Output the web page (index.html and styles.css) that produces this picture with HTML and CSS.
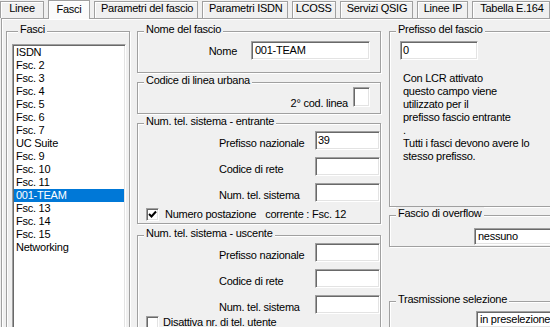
FILE: index.html
```html
<!DOCTYPE html>
<html lang="it">
<head>
<meta charset="utf-8">
<title>Fasci</title>
<link rel="stylesheet" href="styles.css">
</head>
<body>
<div class="tabs">
  <div class="tab">Linee</div>
  <div class="tab active">Fasci</div>
  <div class="tab">Parametri del fascio</div>
  <div class="tab">Parametri ISDN</div>
  <div class="tab tab-narrow">LCOSS</div>
  <div class="tab">Servizi QSIG</div>
  <div class="tab">Linee IP</div>
  <div class="tab tab-wide">Tabella E.164</div>
</div>
<div class="panel">
  <div class="col-left">
    <div class="group g-fasci">
      <div class="legend">Fasci</div>
      <ul class="listbox">
        <li>ISDN</li>
        <li>Fsc. 2</li>
        <li>Fsc. 3</li>
        <li>Fsc. 4</li>
        <li>Fsc. 5</li>
        <li>Fsc. 6</li>
        <li>Fsc. 7</li>
        <li>UC Suite</li>
        <li>Fsc. 9</li>
        <li>Fsc. 10</li>
        <li>Fsc. 11</li>
        <li class="selected">001-TEAM</li>
        <li>Fsc. 13</li>
        <li>Fsc. 14</li>
        <li>Fsc. 15</li>
        <li>Networking</li>
      </ul>
    </div>
  </div>
  <div class="col-mid">
    <div class="group g-nome">
      <div class="legend">Nome del fascio</div>
      <div class="row-right">
        <span class="lbl lbl-nome">Nome</span>
        <div class="field f-nome">001-TEAM</div>
      </div>
    </div>
    <div class="group g-codice">
      <div class="legend">Codice di linea urbana</div>
      <div class="row-right">
        <span class="lbl lbl-cod">2° cod. linea</span>
        <div class="field f-small"></div>
      </div>
    </div>
    <div class="group g-entrante">
      <div class="legend">Num. tel. sistema - entrante</div>
      <div class="form-grid">
        <span class="lbl">Prefisso nazionale</span>
        <div class="field">39</div>
        <span class="lbl">Codice di rete</span>
        <div class="field"></div>
        <span class="lbl">Num. tel. sistema</span>
        <div class="field"></div>
      </div>
      <div class="check-row cr-entrante">
        <span class="checkbox"><svg width="9" height="9" viewBox="0 0 9 9"><polyline points="1,4 3.5,6.5 8,1.5" fill="none" stroke="#000" stroke-width="2"/></svg></span>
        <span class="check-label">Numero postazione</span>
        <span class="current">corrente : Fsc. 12</span>
      </div>
    </div>
    <div class="group g-uscente">
      <div class="legend">Num. tel. sistema - uscente</div>
      <div class="form-grid">
        <span class="lbl">Prefisso nazionale</span>
        <div class="field"></div>
        <span class="lbl">Codice di rete</span>
        <div class="field"></div>
        <span class="lbl">Num. tel. sistema</span>
        <div class="field"></div>
      </div>
      <div class="check-row cr-uscente">
        <span class="checkbox"></span>
        <span class="check-label">Disattiva nr. di tel. utente</span>
      </div>
    </div>
  </div>
  <div class="col-right">
    <div class="group g-prefisso">
      <div class="legend">Prefisso del fascio</div>
      <div class="field f-prefisso">0</div>
      <p class="info">Con LCR attivato<br>questo campo viene<br>utilizzato per il<br>prefisso fascio entrante<br>.<br>Tutti i fasci devono avere lo<br>stesso prefisso.</p>
    </div>
    <div class="group g-overflow">
      <div class="legend">Fascio di overflow</div>
      <div class="combo c-overflow">nessuno</div>
    </div>
    <div class="group g-trasm">
      <div class="legend">Trasmissione selezione</div>
      <div class="combo c-trasm">in preselezione</div>
    </div>
  </div>
</div>
</body>
</html>
```
FILE: styles.css
```css
* { box-sizing: border-box; }

html, body { margin: 0; padding: 0; }

body {
  width: 550px;
  height: 327px;
  overflow: hidden;
  background: #f0f0f0;
  color: #000;
  font-family: "Liberation Sans", Arial, sans-serif;
  font-size: 11px;
  line-height: 13px;
  letter-spacing: -0.25px;
}

/* ---------- tabs ---------- */
.tabs {
  display: flex;
  align-items: flex-start;
  gap: 4px;
  height: 18px;
}

.tab {
  margin-top: 1px;
  height: 17px;
  min-width: 44px;
  padding: 0 6px 3px;
  text-align: center;
  white-space: nowrap;
  background: #f0f0f0;
  border: 1px solid #a0a0a0;
  border-bottom: none;
  box-shadow: inset 1px 1px 0 #fff;
}

.tab.active {
  margin-top: 0;
  margin-bottom: -1px;
  height: 19px;
  min-width: 42px;
  padding-top: 2px;
  background: #fbfbfb;
  position: relative;
  z-index: 1;
}

.tab-narrow { padding: 0 3px 3px; }
.tab-wide { padding: 0 7px 3px; }

/* ---------- panel ---------- */
.panel {
  display: flex;
  align-items: flex-start;
  margin-left: 1px;
  height: 309px;
  border-top: 1px solid #a0a0a0;
  border-left: 1px solid #a0a0a0;
  box-shadow: inset 1px 1px 0 #fff;
}

.col-left { margin: 12px 0 0 4px; }

.col-mid {
  margin: 12px 0 0 7px;
  width: 254px;
  display: flex;
  flex-direction: column;
}

.col-right {
  margin: 12px 0 0 8px;
  width: 170px;
  display: flex;
  flex-direction: column;
}

/* ---------- group boxes ---------- */
.group {
  border: 1px solid #a0a0a0;
  box-shadow: inset 1px 1px 0 #fff, 1px 1px 0 #fff;
}

.legend {
  width: max-content;
  margin: -9px 0 0 6px;
  padding: 0 2px;
  background: #f0f0f0;
  line-height: 13px;
  white-space: nowrap;
}

/* ---------- fields ---------- */
.field, .combo, .listbox, .checkbox {
  background: #fff;
  border: 1px solid;
  border-color: #a0a0a0 #fff #fff #a0a0a0;
  box-shadow: inset 1px 1px 0 #696969, inset -1px -1px 0 #e3e3e3;
}

.field {
  height: 19px;
  padding: 1px 2px 0;
  line-height: 15px;
  white-space: nowrap;
  overflow: hidden;
}

.lbl { white-space: nowrap; }

/* ---------- Fasci list ---------- */
.g-fasci {
  width: 124px;
  height: 300px;
  padding: 0 3px 0 5px;
}

.listbox {
  list-style: none;
  margin: 8px 0 0;
  padding: 1px;
  height: 290px;
}

.listbox li {
  height: 13px;
  padding-left: 2px;
  white-space: nowrap;
}

.listbox li.selected {
  background: #0078d7;
  color: #fff;
}

/* ---------- middle column ---------- */
.row-right {
  display: flex;
  justify-content: flex-end;
  align-items: flex-start;
  padding-right: 10px;
}

.g-nome { height: 42px; }
.g-nome .row-right { margin-top: 5px; gap: 14px; }
.lbl-nome { margin-top: 4px; }
.f-nome { width: 119px; padding-left: 3px; }

.g-codice { height: 32px; margin-top: 9px; }
.g-codice .row-right { gap: 5px; }
.lbl-cod { margin-top: 10px; }
.f-small { width: 17px; height: 20px; }

.g-entrante { height: 101px; margin-top: 9px; }
.g-uscente { height: 100px; margin-top: 11px; }

.form-grid {
  display: grid;
  grid-template-columns: 96px 65px;
  grid-auto-rows: 19px;
  row-gap: 7px;
  margin-top: 3px;
  padding-left: 81px;
}

.form-grid .lbl { margin-top: 6px; }

.check-row {
  display: flex;
  align-items: flex-start;
  padding-left: 8px;
}

.cr-entrante { margin-top: 6px; }
.cr-uscente { margin-top: 2px; }

.checkbox {
  width: 13px;
  height: 13px;
  flex: none;
  display: flex;
  align-items: center;
  justify-content: center;
}

.checkbox svg { display: block; }

.check-label { margin-left: 6px; white-space: nowrap; }
.cr-uscente .check-label { margin-left: 4px; }
.current { margin-left: 9px; white-space: nowrap; }

/* ---------- right column ---------- */
.g-prefisso { height: 176px; }

.f-prefisso {
  width: 78px;
  margin: 5px 0 0 10px;
}

.info {
  margin: 12px 0 0;
  padding-left: 13px;
  line-height: 13px;
  white-space: nowrap;
}

.g-overflow { height: 32px; margin-top: 8px; }
.g-trasm { height: 40px; margin-top: 54px; }

.combo {
  height: 17px;
  width: 90px;
  padding: 1px 3px 0;
  line-height: 13px;
  white-space: nowrap;
  overflow: hidden;
}

.c-overflow { margin: 8px 0 0 84px; }
.c-trasm { margin: 5px 0 0 86px; }
```
